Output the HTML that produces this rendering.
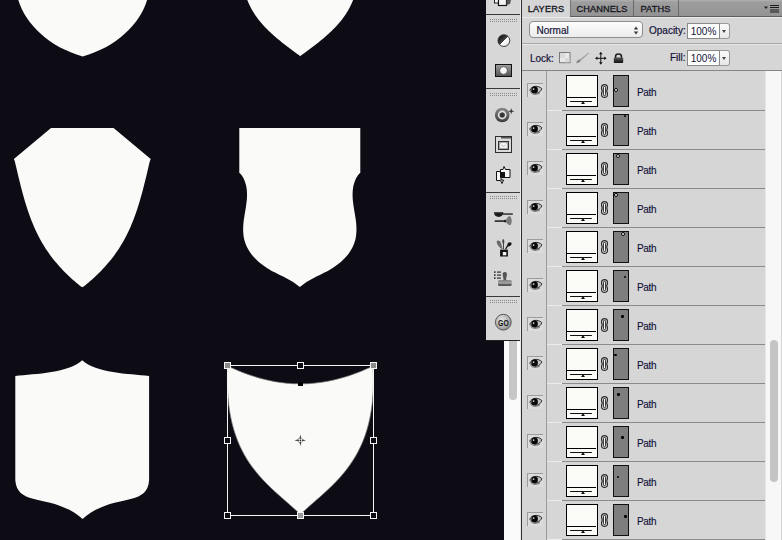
<!DOCTYPE html>
<html><head><meta charset="utf-8">
<style>
*{margin:0;padding:0;box-sizing:border-box}
html,body{width:782px;height:540px;overflow:hidden;background:#0d0b14;font-family:"Liberation Sans",sans-serif}
.abs{position:absolute}
#canvas{position:absolute;left:0;top:0}
#toolbar{position:absolute;left:486px;top:0;width:35px;height:341px;background:#d7d7d7;border-bottom:1px solid #222}
.tsep{position:absolute;left:0;width:35px;height:1px;background:#3a3a3a}
.grip{position:absolute;left:4px;width:27px;height:4px;background:repeating-linear-gradient(90deg,#8a8a8a 0 1px,transparent 1px 2px);-webkit-mask:repeating-linear-gradient(180deg,#000 0 1px,transparent 1px 2px);mask:repeating-linear-gradient(180deg,#000 0 1px,transparent 1px 2px)}
#vscroll{position:absolute;left:504px;top:341px;width:17px;height:199px;background:#fafafa;border-right:1px solid #1a1a1a}
#vthumb{position:absolute;left:5px;top:0;width:8px;height:59px;background:#c6c6c6;border-radius:0 0 4px 4px}
#vline{position:absolute;left:520px;top:0;width:1px;height:540px;background:#eaeaea}
#vline2{position:absolute;left:521px;top:0;width:1px;height:540px;background:#2e2e2e}
#panel{position:absolute;left:522px;top:0;width:260px;height:540px;background:#d6d6d6;overflow:hidden}
#tabs{position:absolute;left:0;top:0;width:260px;height:17px;background:linear-gradient(#b2b2b2 0,#9e9e9e 2px,#939393 100%);border-bottom:1px solid #5e5e5e}
.tab{position:absolute;top:0;height:16px;font-size:9.2px;letter-spacing:0.15px;color:#1a1a24;line-height:16px;padding-top:1px;text-align:center;-webkit-text-stroke:0.35px #1a1a24}
.tab.act{background:#d6d6d6;height:17px;color:#101828}
.tsepv{position:absolute;top:0;width:1px;height:16px;background:#6a6a6a}
.row{position:absolute;left:0;width:243px;height:39px}
.row:before{content:"";position:absolute;left:40px;top:0;width:203px;height:1px;background:#8a8a8a}
.row.first:before,.row.first:after{display:none}
.row:after{content:"";position:absolute;left:25px;top:0;width:15px;height:1px;background:#ececec}
.eye{position:absolute;left:5px;top:12px;width:16px;height:14px;border-top:1px solid #9c9c9c;border-left:1px solid #9c9c9c;background:#dcdcdc}
.ecol{position:absolute;left:24px;top:71px;width:1px;height:469px;background:#9a9a9a}
.thumb{position:absolute;left:44px;top:4px;width:32px;height:32px;background:#fbfbf8;border:1.5px solid #000}
.mask{position:absolute;left:91px;top:4px;width:16px;height:32px;background:#7e7e7e;border:1.5px solid #111}
.pname{position:absolute;left:115px;top:16px;font-size:10px;letter-spacing:-0.35px;color:#10103a;-webkit-text-stroke:0.12px #10103a}
#rscroll{position:absolute;left:243px;top:71px;width:16px;height:469px;background:#f7f7f7;border-left:1px solid #e6e6e6}
#rthumb{position:absolute;left:4px;top:269px;width:8px;height:142px;background:#c4c4c4;border-radius:4px}

#opts{position:absolute;left:0;top:17px;width:260px;height:53px;background:#d6d6d6;box-shadow:inset 0 1px 0 #e9e9e9}
.hl{position:absolute;left:0;width:260px;height:1px}
.dd{position:absolute;left:7px;top:4px;width:114px;height:17px;border:1px solid #8e8e8e;border-radius:4px;background:linear-gradient(#fdfdfd,#ececec)}
.dd span{position:absolute;left:6.5px;top:3px;-webkit-text-stroke:0.2px #16163a;font-size:10px;color:#16163a}
.lbl{position:absolute;font-size:10px;color:#141438;-webkit-text-stroke:0.2px #141438}
.inp{position:absolute;width:33px;height:16px;border:1px solid #8a8a8a;background:#fff;font-size:10px;color:#141438;text-align:center;line-height:15px}
.stp{position:absolute;width:10px;height:16px;border:1px solid #9a9a9a;border-left:none;border-radius:0 3px 3px 0;background:linear-gradient(#fbfbfb,#e6e6e6)}
.stp:after{content:"";position:absolute;left:2px;top:6px;border-left:2.5px solid transparent;border-right:2.5px solid transparent;border-top:3px solid #444}
.dot{position:absolute;width:2.6px;height:2.6px;border-radius:50%;background:#000}
.dot.h{background:#fff;border:0.8px solid #000;width:4px;height:4px}
.tl1{position:absolute;left:0;top:21px;width:29px;height:1px;background:#000}
.tl2{position:absolute;left:3px;top:24.5px;width:22px;height:1px;background:#111;border-radius:1px}
.tri{position:absolute;left:14px;top:25px;border-left:2.5px solid transparent;border-right:2.5px solid transparent;border-bottom:3px solid #111}
.link{position:absolute;left:79px;top:13px;width:7px;height:14px}
</style></head><body>


<svg id="canvas" width="782" height="540" viewBox="0 0 782 540">
  <g fill="#fafaf8">
    <!-- shape 1 -->
    <path d="M18.3 -2 L18.3 0 C25.51 24.42 49.48 47.07 82.7 56.5 C115.92 47.07 139.89 24.42 147.1 0 L147.1 -2 Z"/>
    <!-- shape 2 -->
    <path d="M246.20 -3.00 246.79 -1.46 247.38 0.14 248.01 1.72 248.67 3.27 249.36 4.80 250.09 6.31 250.85 7.79 251.65 9.26 252.47 10.70 253.32 12.12 254.20 13.52 255.11 14.89 256.05 16.25 257.01 17.59 258.00 18.91 259.01 20.22 260.05 21.50 261.11 22.77 262.18 24.02 263.28 25.25 264.40 26.47 265.54 27.67 266.70 28.86 267.87 30.03 269.06 31.19 270.27 32.34 271.49 33.47 272.73 34.59 273.97 35.70 275.23 36.80 276.50 37.89 277.78 38.96 279.07 40.03 280.37 41.08 281.67 42.13 282.98 43.17 284.30 44.20 285.62 45.22 286.94 46.23 288.27 47.24 289.60 48.24 290.93 49.24 292.27 50.23 293.60 51.22 294.93 52.20 296.26 53.17 297.58 54.15 298.90 55.12 300.20 56.20 L301.50 55.12 302.82 54.15 304.14 53.17 305.47 52.20 306.80 51.22 308.13 50.23 309.47 49.24 310.80 48.24 312.13 47.24 313.46 46.23 314.78 45.22 316.10 44.20 317.42 43.17 318.73 42.13 320.03 41.08 321.33 40.03 322.62 38.96 323.90 37.89 325.17 36.80 326.43 35.70 327.67 34.59 328.91 33.47 330.13 32.34 331.34 31.19 332.53 30.03 333.70 28.86 334.86 27.67 336.00 26.47 337.12 25.25 338.22 24.02 339.29 22.77 340.35 21.50 341.39 20.22 342.40 18.91 343.39 17.59 344.35 16.25 345.29 14.89 346.20 13.52 347.08 12.12 347.93 10.70 348.75 9.26 349.55 7.79 350.31 6.31 351.04 4.80 351.73 3.27 352.39 1.72 353.02 0.14 353.61 -1.46 354.20 -3.00 Z"/>
    <!-- shape 3 -->
    <path d="M51 128 L113.6 128 L150.70 158.90 149.80 161.20 149.23 163.64 148.66 166.09 148.08 168.54 147.50 171.00 146.92 173.46 146.34 175.92 145.74 178.38 145.14 180.84 144.53 183.31 143.91 185.77 143.28 188.23 142.64 190.68 141.98 193.14 141.31 195.59 140.62 198.03 139.91 200.47 139.18 202.90 138.44 205.32 137.67 207.74 136.88 210.15 136.06 212.54 135.22 214.93 134.35 217.30 133.46 219.67 132.54 222.02 131.58 224.35 130.59 226.67 129.58 228.98 128.52 231.27 127.43 233.54 126.31 235.79 125.14 238.03 123.94 240.24 122.70 242.44 121.41 244.61 120.09 246.76 118.72 248.89 117.30 251.00 115.85 253.08 114.37 255.14 112.84 257.18 111.28 259.19 109.68 261.17 108.05 263.12 106.39 265.05 104.70 266.96 102.98 268.83 101.23 270.67 99.45 272.49 97.65 274.28 95.83 276.03 93.98 277.76 92.11 279.45 90.21 281.11 88.30 282.74 86.38 284.34 84.43 285.90 82.30 287.30 L82.30 287.30 80.17 285.90 78.22 284.34 76.30 282.74 74.39 281.11 72.49 279.45 70.62 277.76 68.77 276.03 66.95 274.28 65.15 272.49 63.37 270.67 61.62 268.83 59.90 266.96 58.21 265.05 56.55 263.12 54.92 261.17 53.32 259.19 51.76 257.18 50.23 255.14 48.75 253.08 47.30 251.00 45.88 248.89 44.51 246.76 43.19 244.61 41.90 242.44 40.66 240.24 39.46 238.03 38.29 235.79 37.17 233.54 36.08 231.27 35.02 228.98 34.01 226.67 33.02 224.35 32.06 222.02 31.14 219.67 30.25 217.30 29.38 214.93 28.54 212.54 27.72 210.15 26.93 207.74 26.16 205.32 25.42 202.90 24.69 200.47 23.98 198.03 23.29 195.59 22.62 193.14 21.96 190.68 21.32 188.23 20.69 185.77 20.07 183.31 19.46 180.84 18.86 178.38 18.26 175.92 17.68 173.46 17.10 171.00 16.52 168.54 15.94 166.09 15.37 163.64 14.80 161.20 13.90 158.90 Z"/>
    <!-- shape 4 -->
    <path d="M239.3 128 L360.3 128 L360.3 173 L360.00 173.00 358.51 174.48 357.28 176.27 356.22 178.12 355.31 180.00 354.55 181.93 353.93 183.89 353.44 185.87 353.06 187.88 352.80 189.91 352.64 191.95 352.57 194.00 352.59 196.06 352.68 198.13 352.84 200.21 353.05 202.29 353.32 204.37 353.62 206.46 353.95 208.54 354.30 210.63 354.65 212.72 355.00 214.81 355.34 216.91 355.65 219.00 355.93 221.11 356.15 223.22 356.32 225.33 356.43 227.45 356.46 229.57 356.40 231.68 356.26 233.77 356.03 235.84 355.69 237.89 355.25 239.90 354.70 241.86 354.03 243.79 353.26 245.67 352.39 247.50 351.43 249.29 350.37 251.04 349.23 252.74 348.00 254.39 346.70 256.00 345.33 257.55 343.88 259.06 342.38 260.52 340.82 261.94 339.21 263.30 337.55 264.61 335.84 265.87 334.10 267.08 332.32 268.24 330.51 269.35 328.68 270.40 326.83 271.41 324.97 272.37 323.09 273.31 321.21 274.23 319.33 275.15 317.45 276.06 315.58 276.98 313.72 277.91 311.89 278.88 310.07 279.88 308.28 280.93 306.52 282.04 304.80 283.22 303.12 284.46 301.48 285.80 299.80 287.10 L299.80 287.10 298.12 285.80 296.48 284.46 294.80 283.22 293.08 282.04 291.32 280.93 289.53 279.88 287.71 278.88 285.88 277.91 284.02 276.98 282.15 276.06 280.27 275.15 278.39 274.23 276.51 273.31 274.63 272.37 272.77 271.41 270.92 270.40 269.09 269.35 267.28 268.24 265.50 267.08 263.76 265.87 262.05 264.61 260.39 263.30 258.78 261.94 257.22 260.52 255.72 259.06 254.27 257.55 252.90 256.00 251.60 254.39 250.37 252.74 249.23 251.04 248.17 249.29 247.21 247.50 246.34 245.67 245.57 243.79 244.90 241.86 244.35 239.90 243.91 237.89 243.57 235.84 243.34 233.77 243.20 231.68 243.14 229.57 243.17 227.45 243.28 225.33 243.45 223.22 243.67 221.11 243.95 219.00 244.26 216.91 244.60 214.81 244.95 212.72 245.30 210.63 245.65 208.54 245.98 206.46 246.28 204.37 246.55 202.29 246.76 200.21 246.92 198.13 247.01 196.06 247.03 194.00 246.96 191.95 246.80 189.91 246.54 187.88 246.16 185.87 245.67 183.89 245.05 181.93 244.29 180.00 243.38 178.12 242.32 176.27 241.09 174.48 239.60 173.00 L239.3 173 Z"/>
    <!-- shape 5 -->
    <path d="M15.3 376 C36.02 373.75 68.52 373.12 82.2 360.3 C95.88 373.12 128.38 373.75 149.1 376 L149.1 480.2 C147.44 507.75 112.53 492.54 82.6 518.9 C52.17 492.54 17.26 507.75 15.3 480.2 Z"/>
    <!-- shape 6 -->
    <path d="M227.8 366 C231 367.35 263.51 384.35 300.4 383.8 C337.29 384.35 369.80 367.35 373.00 366 C378.16 458.5 334.26 482.7 300.4 514.3 C266.54 482.7 222.64 458.5 227.8 366 Z" stroke="#7a7a7a" stroke-width="0.7"/>
  </g>
  <!-- transform box -->
  <g stroke="#f4f4f4" stroke-width="1" fill="none" shape-rendering="crispEdges">
    <rect x="227.5" y="365.5" width="146" height="150"/>
  </g>
  <g stroke="#f4f4f4" stroke-width="1" fill="#0d0b14" shape-rendering="crispEdges">
    <rect x="224.5" y="362.5" width="6" height="6" fill="#8a8a8a"/>
    <rect x="297.5" y="362.5" width="6" height="6"/>
    <rect x="370.5" y="362.5" width="6" height="6" fill="#8a8a8a"/>
    <rect x="224.5" y="437.5" width="6" height="6"/>
    <rect x="370.5" y="437.5" width="6" height="6"/>
    <rect x="224.5" y="512.5" width="6" height="6"/>
    <rect x="297.5" y="512.5" width="6" height="6" fill="#9a9a9a"/>
    <rect x="370.5" y="512.5" width="6" height="6"/>
  </g>
  <rect x="298" y="382" width="5" height="4" fill="#000"/>
  <g fill="#000">
    <path d="M300.3 434.5 L301 438.3 L300.3 439 L299.6 438.3Z M300.3 446 L301 442.3 L300.3 441.6 L299.6 442.3Z M294.5 440.3 L298.3 439.6 L299 440.3 L298.3 441Z M306 440.3 L302.3 439.6 L301.6 440.3 L302.3 441Z"/>
    <circle cx="300.3" cy="440.3" r="2.4" fill="none" stroke="#777" stroke-width="0.7"/>
    <circle cx="300.3" cy="440.3" r="0.8"/>
  </g>
</svg>

<div id="toolbar">

  <svg style="position:absolute;left:0;top:0" width="35" height="340" viewBox="486 0 35 340">
    <defs>
      <radialGradient id="gb" cx="0.4" cy="0.35" r="0.75"><stop offset="0" stop-color="#e6e6e6"/><stop offset="0.7" stop-color="#a8a8a8"/><stop offset="1" stop-color="#6a6a6a"/></radialGradient>
      <linearGradient id="gm" x1="0" y1="0" x2="0" y2="1"><stop offset="0" stop-color="#a0a0a0"/><stop offset="1" stop-color="#505050"/></linearGradient>
      <linearGradient id="gs" x1="0" y1="0" x2="0" y2="1"><stop offset="0" stop-color="#8a8a8a"/><stop offset="1" stop-color="#3a3a3a"/></linearGradient>
      <linearGradient id="ga" x1="0" y1="0" x2="1" y2="1"><stop offset="0" stop-color="#000"/><stop offset="0.49" stop-color="#444"/><stop offset="0.51" stop-color="#fff"/><stop offset="1" stop-color="#ddd"/></linearGradient>
      <linearGradient id="gt" x1="0" y1="0" x2="0" y2="1"><stop offset="0" stop-color="#777"/><stop offset="0.5" stop-color="#aaa"/><stop offset="1" stop-color="#222"/></linearGradient>
    </defs>
    <!-- top icon -->
    <rect x="494.5" y="-4" width="5" height="7" fill="#f2f2f2" stroke="#222" stroke-width="1"/>
    <rect x="498.5" y="-3" width="8" height="8.5" fill="#f4f4f4" stroke="#111" stroke-width="1.2"/>
    <path d="M506.5 0 L511 0 L510 4 L506.5 5Z" fill="#555"/>
    <!-- adjustments -->
    <circle cx="503.9" cy="40.6" r="5.9" fill="url(#ga)" stroke="#2a2a2a" stroke-width="0.9"/>
    <!-- masks -->
    <rect x="495.5" y="64.5" width="16" height="12" fill="url(#gm)" stroke="#111" stroke-width="1"/>
    <circle cx="503.5" cy="70.5" r="3.9" fill="#f7f7f7" stroke="#333" stroke-width="0.7"/>
    <!-- styles -->
    <circle cx="502.2" cy="115" r="7.3" fill="url(#gs)"/>
    <circle cx="502.2" cy="115" r="3.6" fill="none" stroke="#e0e0e0" stroke-width="1.6"/>
    <circle cx="502.2" cy="115" r="2.2" fill="#333"/>
    <path d="M511.2 108 L511.9 110.6 L514.5 111.3 L511.9 112 L511.2 114.6 L510.5 112 L507.9 111.3 L510.5 110.6Z" fill="#333"/>
    <!-- frame -->
    <rect x="495.5" y="136.5" width="16" height="16" fill="#dadada" stroke="#2e2e2e" stroke-width="1"/>
    <rect x="501" y="137" width="10" height="1.5" fill="#555"/>
    <rect x="498.5" y="141.5" width="10" height="8" fill="#a8a8a8" stroke="#333" stroke-width="1"/>
    <rect x="500" y="143" width="7" height="5" rx="1.5" fill="#f4f4f4"/>
    <path d="M501.5 145 L503.5 146.5 L505.5 145" fill="none" stroke="#999" stroke-width="0.7"/>
    <!-- clone source -->
    <path d="M496.5 171.5 L501 171.5 L501 180 L503.5 180 L502 183.5 L500.5 180.5 L496.5 180.5Z" fill="#f6f6f6" stroke="#111" stroke-width="1"/>
    <path d="M500.5 169.5 L503 169.5 L504 166.5 L505.5 169.5 L510 169.5 L510 177.5 L500.5 177.5Z" fill="#f6f6f6" stroke="#111" stroke-width="1"/>
    <rect x="500.5" y="172" width="4.5" height="5.5" fill="#111"/>
    <!-- brushes -->
    <path d="M493.9 212.2 L503.4 212.2 C503.4 215 501 216.9 498.6 216.9 C496 216.9 494 215 493.9 212.2Z" fill="#1e1e1e"/>
    <rect x="503" y="213.2" width="9.8" height="1.7" fill="#444"/>
    <rect x="494.7" y="220.2" width="10.5" height="1.8" fill="#3a3a3a"/>
    <circle cx="505.3" cy="221.1" r="1.3" fill="#111"/>
    <path d="M505.5 221 C506.5 218 508.5 216 510 216 C512 218.5 512.3 222.5 510.5 225.2 C508.5 225 506.5 223.5 505.5 221Z" fill="#7a7a7a"/>
    <!-- brush holder -->
    <path d="M501.5 249 C499 247 496.5 244 496.6 241.5 C497.6 240 499.5 240.5 500.5 242 C501.5 244.5 502.2 247 502.5 249Z" fill="#6a6a6a"/>
    <path d="M503 249 L503 244 C502 242 502 239.5 503.2 239 C504.5 239.5 504.6 242 504 244 L504 249Z" fill="#444"/>
    <path d="M505 249 L507.5 244.5 C507.5 242.5 509.5 241.5 511.5 242.8 C512 245 510.5 246.5 508 246.5 L506 249.5Z" fill="#151515"/>
    <rect x="500.1" y="249.6" width="7.8" height="6.9" fill="#111"/>
    <rect x="502.8" y="252" width="3.5" height="3.3" fill="#f2f2f2"/>
    <!-- tool presets -->
    <g fill="#333">
      <rect x="494" y="271.3" width="1.6" height="1.6"/><rect x="497" y="271.5" width="4" height="1.2"/>
      <rect x="494" y="274.3" width="1.6" height="1.6"/><rect x="497" y="274.5" width="4" height="1.2"/>
      <rect x="494" y="277.3" width="1.6" height="1.6"/><rect x="497" y="277.5" width="4" height="1.2"/>
    </g>
    <path d="M504.8 272 C506.6 272 507.4 273.5 506.8 275.5 L506 279.5 L507 280.5 L502.6 280.5 L503.6 279.5 L502.8 275.5 C502.2 273.5 503 272 504.8 272Z" fill="#555"/>
    <rect x="498" y="280.3" width="13.7" height="5.4" rx="1.2" fill="url(#gt)"/>
    <!-- go button -->
    <circle cx="503.3" cy="322.2" r="7.9" fill="url(#gb)" stroke="#5a5a5a" stroke-width="1"/>
    <text x="503.4" y="326" font-family="Liberation Sans" font-size="9.5" font-weight="bold" fill="#111" text-anchor="middle" transform="translate(503.4 0) scale(0.72 1) translate(-503.4 0)">GO</text>
  </svg>
  <div class="tsep" style="top:14px"></div>
  <div class="grip" style="top:19px"></div>
  <div class="tsep" style="top:88px"></div>
  <div class="grip" style="top:93px"></div>
  <div class="tsep" style="top:192px"></div>
  <div class="grip" style="top:196px"></div>
  <div class="tsep" style="top:296px"></div>
  <div class="grip" style="top:300px"></div>
</div>
<div id="vscroll"><div id="vthumb"></div></div>
<div id="vline"></div><div id="vline2"></div>

<div id="panel">
  <div id="tabs">
    <div class="tab act" style="left:0;width:48px">LAYERS</div>
    <div class="tab" style="left:48px;width:63px;border-left:1px solid #777">CHANNELS</div>
    <div class="tsepv" style="left:111px"></div>
    <div class="tab" style="left:111px;width:45px">PATHS</div>
    <div class="tsepv" style="left:156px"></div>
    <svg style="position:absolute;left:240px;top:3px" width="18" height="11" viewBox="0 0 18 11">
      <path d="M2 3.5 L6 3.5 L4 6 Z" fill="#222"/>
      <rect x="8" y="2" width="9" height="1" fill="#1a1a1a"/>
      <rect x="8" y="4" width="9" height="1" fill="#1a1a1a"/>
      <rect x="8" y="6.5" width="9" height="1" fill="#1a1a1a"/>
      <rect x="8" y="8.5" width="9" height="1" fill="#1a1a1a"/>
    </svg>
  </div>

  <div id="opts">
    <div class="dd"><span>Normal</span>
      <svg style="position:absolute;left:103px;top:4px" width="6" height="9" viewBox="0 0 6 9"><path d="M3 0.5 L5.2 3.5 L0.8 3.5 Z M0.8 5.5 L5.2 5.5 L3 8.5 Z" fill="#3a3a3a"/></svg>
    </div>
    <div class="lbl" style="left:127px;top:8px">Opacity:</div>
    <div class="inp" style="left:165px;top:6px">100%</div>
    <div class="stp" style="left:198px;top:6px"></div>
    <div class="hl" style="top:26px;background:#a9a9a9"></div>
    <div class="hl" style="top:27px;background:#e8e8e8"></div>
    <div class="lbl" style="left:8px;top:36px">Lock:</div>
    <svg style="position:absolute;left:37px;top:35px" width="74" height="13" viewBox="0 0 74 13">
      <defs><linearGradient id="lkg" x1="0" y1="0" x2="0" y2="1"><stop offset="0" stop-color="#555"/><stop offset="1" stop-color="#111"/></linearGradient></defs>
      <rect x="0.5" y="0.5" width="10.5" height="10.2" fill="#e9e9e9" stroke="#7a7a7a" stroke-width="1"/>
      <path d="M1 1h5v5H1z M6 6h4.5v4.2H6z" fill="#d9d9d9"/>
      <path d="M17.2 11.2 C17.6 9 18.8 7.6 20.6 7.2 L21.8 8.4 C21.4 10.2 19.6 11.2 17.2 11.2Z" fill="#8a8a8a"/>
      <path d="M21 7.6 L29.6 0.4 L30.2 1 L22 8.4Z" fill="#9a9a9a"/>
      <g fill="#111">
        <rect x="41.3" y="1.5" width="1" height="9.5"/>
        <rect x="37" y="5.8" width="9.6" height="1"/>
        <path d="M41.8 -0.2 L43.6 2.2 L40 2.2Z M41.8 12.7 L43.6 10.3 L40 10.3Z M36 6.3 L38.4 4.5 L38.4 8.1Z M47.6 6.3 L45.2 4.5 L45.2 8.1Z"/>
      </g>
      <path d="M56.6 6 L56.6 4.2 C56.6 1.2 62.4 1.2 62.4 4.2 L62.4 6" fill="none" stroke="#1a1a1a" stroke-width="1.6"/>
      <rect x="54.8" y="5.6" width="9.4" height="5.4" rx="0.8" fill="url(#lkg)"/>
    </svg>
    <div class="lbl" style="left:148px;top:35px">Fill:</div>
    <div class="inp" style="left:165px;top:33px">100%</div>
    <div class="stp" style="left:198px;top:33px"></div>
  </div>
  <div class="hl" style="top:70px;background:#858585"></div>
  <div class="ecol"></div>
  <div class="row first" style="top:71px">
    <div class="eye"><svg style="position:absolute;left:0.5px;top:0.3px" width="14" height="12" viewBox="0 0 14 12"><path d="M0.8 6.2 C2.5 1.8 9 1 12.8 4.6 C11.5 9.8 4 11 0.8 6.2 Z" fill="#c4c4c4" stroke="#2a2a2a" stroke-width="1"/><circle cx="5.6" cy="5.9" r="3.3" fill="#080808"/><circle cx="4.6" cy="5.1" r="0.9" fill="#d8d8d8"/><path d="M1.5 8.5 C4 11 8 10.8 11 9" fill="none" stroke="#555" stroke-width="0.8"/></svg></div>
    <div class="thumb"><div class="tl1"></div><div class="tl2"></div><div class="tri"></div></div>
    <div class="link"><svg width="7" height="14" viewBox="0.3 0 7.4 14" preserveAspectRatio="none"><path d="M4 0.6 C6.2 0.6 7.2 2 7.2 3.8 C7.2 5.4 6.4 6.2 6.4 7 C6.4 7.8 7.2 8.6 7.2 10.2 C7.2 12 6.2 13.4 4 13.4 C1.8 13.4 0.8 12 0.8 10.2 C0.8 8.6 1.6 7.8 1.6 7 C1.6 6.2 0.8 5.4 0.8 3.8 C0.8 2 1.8 0.6 4 0.6Z" fill="#d8d8d8" stroke="#2a2a2a" stroke-width="1.2"/><rect x="2.8" y="2.4" width="2.4" height="9.2" rx="1.2" fill="#fff" stroke="#1a1a1a" stroke-width="1"/></svg></div>
    <div class="mask"><div class="dot h" style="left:0.0px;top:11.9px"></div></div>
    <div class="pname">Path</div>
  </div>
  <div class="row" style="top:110px">
    <div class="eye"><svg style="position:absolute;left:0.5px;top:0.3px" width="14" height="12" viewBox="0 0 14 12"><path d="M0.8 6.2 C2.5 1.8 9 1 12.8 4.6 C11.5 9.8 4 11 0.8 6.2 Z" fill="#c4c4c4" stroke="#2a2a2a" stroke-width="1"/><circle cx="5.6" cy="5.9" r="3.3" fill="#080808"/><circle cx="4.6" cy="5.1" r="0.9" fill="#d8d8d8"/><path d="M1.5 8.5 C4 11 8 10.8 11 9" fill="none" stroke="#555" stroke-width="0.8"/></svg></div>
    <div class="thumb"><div class="tl1"></div><div class="tl2"></div><div class="tri"></div></div>
    <div class="link"><svg width="7" height="14" viewBox="0.3 0 7.4 14" preserveAspectRatio="none"><path d="M4 0.6 C6.2 0.6 7.2 2 7.2 3.8 C7.2 5.4 6.4 6.2 6.4 7 C6.4 7.8 7.2 8.6 7.2 10.2 C7.2 12 6.2 13.4 4 13.4 C1.8 13.4 0.8 12 0.8 10.2 C0.8 8.6 1.6 7.8 1.6 7 C1.6 6.2 0.8 5.4 0.8 3.8 C0.8 2 1.8 0.6 4 0.6Z" fill="#d8d8d8" stroke="#2a2a2a" stroke-width="1.2"/><rect x="2.8" y="2.4" width="2.4" height="9.2" rx="1.2" fill="#fff" stroke="#1a1a1a" stroke-width="1"/></svg></div>
    <div class="mask"><div class="dot" style="left:9.7px;top:-0.3px"></div></div>
    <div class="pname">Path</div>
  </div>
  <div class="row" style="top:149px">
    <div class="eye"><svg style="position:absolute;left:0.5px;top:0.3px" width="14" height="12" viewBox="0 0 14 12"><path d="M0.8 6.2 C2.5 1.8 9 1 12.8 4.6 C11.5 9.8 4 11 0.8 6.2 Z" fill="#c4c4c4" stroke="#2a2a2a" stroke-width="1"/><circle cx="5.6" cy="5.9" r="3.3" fill="#080808"/><circle cx="4.6" cy="5.1" r="0.9" fill="#d8d8d8"/><path d="M1.5 8.5 C4 11 8 10.8 11 9" fill="none" stroke="#555" stroke-width="0.8"/></svg></div>
    <div class="thumb"><div class="tl1"></div><div class="tl2"></div><div class="tri"></div></div>
    <div class="link"><svg width="7" height="14" viewBox="0.3 0 7.4 14" preserveAspectRatio="none"><path d="M4 0.6 C6.2 0.6 7.2 2 7.2 3.8 C7.2 5.4 6.4 6.2 6.4 7 C6.4 7.8 7.2 8.6 7.2 10.2 C7.2 12 6.2 13.4 4 13.4 C1.8 13.4 0.8 12 0.8 10.2 C0.8 8.6 1.6 7.8 1.6 7 C1.6 6.2 0.8 5.4 0.8 3.8 C0.8 2 1.8 0.6 4 0.6Z" fill="#d8d8d8" stroke="#2a2a2a" stroke-width="1.2"/><rect x="2.8" y="2.4" width="2.4" height="9.2" rx="1.2" fill="#fff" stroke="#1a1a1a" stroke-width="1"/></svg></div>
    <div class="mask"><div class="dot h" style="left:1.6px;top:-0.3px"></div></div>
    <div class="pname">Path</div>
  </div>
  <div class="row" style="top:188px">
    <div class="eye"><svg style="position:absolute;left:0.5px;top:0.3px" width="14" height="12" viewBox="0 0 14 12"><path d="M0.8 6.2 C2.5 1.8 9 1 12.8 4.6 C11.5 9.8 4 11 0.8 6.2 Z" fill="#c4c4c4" stroke="#2a2a2a" stroke-width="1"/><circle cx="5.6" cy="5.9" r="3.3" fill="#080808"/><circle cx="4.6" cy="5.1" r="0.9" fill="#d8d8d8"/><path d="M1.5 8.5 C4 11 8 10.8 11 9" fill="none" stroke="#555" stroke-width="0.8"/></svg></div>
    <div class="thumb"><div class="tl1"></div><div class="tl2"></div><div class="tri"></div></div>
    <div class="link"><svg width="7" height="14" viewBox="0.3 0 7.4 14" preserveAspectRatio="none"><path d="M4 0.6 C6.2 0.6 7.2 2 7.2 3.8 C7.2 5.4 6.4 6.2 6.4 7 C6.4 7.8 7.2 8.6 7.2 10.2 C7.2 12 6.2 13.4 4 13.4 C1.8 13.4 0.8 12 0.8 10.2 C0.8 8.6 1.6 7.8 1.6 7 C1.6 6.2 0.8 5.4 0.8 3.8 C0.8 2 1.8 0.6 4 0.6Z" fill="#d8d8d8" stroke="#2a2a2a" stroke-width="1.2"/><rect x="2.8" y="2.4" width="2.4" height="9.2" rx="1.2" fill="#fff" stroke="#1a1a1a" stroke-width="1"/></svg></div>
    <div class="mask"><div class="dot h" style="left:-0.1px;top:-0.4px"></div></div>
    <div class="pname">Path</div>
  </div>
  <div class="row" style="top:227px">
    <div class="eye"><svg style="position:absolute;left:0.5px;top:0.3px" width="14" height="12" viewBox="0 0 14 12"><path d="M0.8 6.2 C2.5 1.8 9 1 12.8 4.6 C11.5 9.8 4 11 0.8 6.2 Z" fill="#c4c4c4" stroke="#2a2a2a" stroke-width="1"/><circle cx="5.6" cy="5.9" r="3.3" fill="#080808"/><circle cx="4.6" cy="5.1" r="0.9" fill="#d8d8d8"/><path d="M1.5 8.5 C4 11 8 10.8 11 9" fill="none" stroke="#555" stroke-width="0.8"/></svg></div>
    <div class="thumb"><div class="tl1"></div><div class="tl2"></div><div class="tri"></div></div>
    <div class="link"><svg width="7" height="14" viewBox="0.3 0 7.4 14" preserveAspectRatio="none"><path d="M4 0.6 C6.2 0.6 7.2 2 7.2 3.8 C7.2 5.4 6.4 6.2 6.4 7 C6.4 7.8 7.2 8.6 7.2 10.2 C7.2 12 6.2 13.4 4 13.4 C1.8 13.4 0.8 12 0.8 10.2 C0.8 8.6 1.6 7.8 1.6 7 C1.6 6.2 0.8 5.4 0.8 3.8 C0.8 2 1.8 0.6 4 0.6Z" fill="#d8d8d8" stroke="#2a2a2a" stroke-width="1.2"/><rect x="2.8" y="2.4" width="2.4" height="9.2" rx="1.2" fill="#fff" stroke="#1a1a1a" stroke-width="1"/></svg></div>
    <div class="mask"><div class="dot h" style="left:6.8px;top:-0.1px"></div></div>
    <div class="pname">Path</div>
  </div>
  <div class="row" style="top:266px">
    <div class="eye"><svg style="position:absolute;left:0.5px;top:0.3px" width="14" height="12" viewBox="0 0 14 12"><path d="M0.8 6.2 C2.5 1.8 9 1 12.8 4.6 C11.5 9.8 4 11 0.8 6.2 Z" fill="#c4c4c4" stroke="#2a2a2a" stroke-width="1"/><circle cx="5.6" cy="5.9" r="3.3" fill="#080808"/><circle cx="4.6" cy="5.1" r="0.9" fill="#d8d8d8"/><path d="M1.5 8.5 C4 11 8 10.8 11 9" fill="none" stroke="#555" stroke-width="0.8"/></svg></div>
    <div class="thumb"><div class="tl1"></div><div class="tl2"></div><div class="tri"></div></div>
    <div class="link"><svg width="7" height="14" viewBox="0.3 0 7.4 14" preserveAspectRatio="none"><path d="M4 0.6 C6.2 0.6 7.2 2 7.2 3.8 C7.2 5.4 6.4 6.2 6.4 7 C6.4 7.8 7.2 8.6 7.2 10.2 C7.2 12 6.2 13.4 4 13.4 C1.8 13.4 0.8 12 0.8 10.2 C0.8 8.6 1.6 7.8 1.6 7 C1.6 6.2 0.8 5.4 0.8 3.8 C0.8 2 1.8 0.6 4 0.6Z" fill="#d8d8d8" stroke="#2a2a2a" stroke-width="1.2"/><rect x="2.8" y="2.4" width="2.4" height="9.2" rx="1.2" fill="#fff" stroke="#1a1a1a" stroke-width="1"/></svg></div>
    <div class="mask"><div class="dot" style="left:9.7px;top:4.9px"></div></div>
    <div class="pname">Path</div>
  </div>
  <div class="row" style="top:305px">
    <div class="eye"><svg style="position:absolute;left:0.5px;top:0.3px" width="14" height="12" viewBox="0 0 14 12"><path d="M0.8 6.2 C2.5 1.8 9 1 12.8 4.6 C11.5 9.8 4 11 0.8 6.2 Z" fill="#c4c4c4" stroke="#2a2a2a" stroke-width="1"/><circle cx="5.6" cy="5.9" r="3.3" fill="#080808"/><circle cx="4.6" cy="5.1" r="0.9" fill="#d8d8d8"/><path d="M1.5 8.5 C4 11 8 10.8 11 9" fill="none" stroke="#555" stroke-width="0.8"/></svg></div>
    <div class="thumb"><div class="tl1"></div><div class="tl2"></div><div class="tri"></div></div>
    <div class="link"><svg width="7" height="14" viewBox="0.3 0 7.4 14" preserveAspectRatio="none"><path d="M4 0.6 C6.2 0.6 7.2 2 7.2 3.8 C7.2 5.4 6.4 6.2 6.4 7 C6.4 7.8 7.2 8.6 7.2 10.2 C7.2 12 6.2 13.4 4 13.4 C1.8 13.4 0.8 12 0.8 10.2 C0.8 8.6 1.6 7.8 1.6 7 C1.6 6.2 0.8 5.4 0.8 3.8 C0.8 2 1.8 0.6 4 0.6Z" fill="#d8d8d8" stroke="#2a2a2a" stroke-width="1.2"/><rect x="2.8" y="2.4" width="2.4" height="9.2" rx="1.2" fill="#fff" stroke="#1a1a1a" stroke-width="1"/></svg></div>
    <div class="mask"><div class="dot" style="left:7.0px;top:5.1px"></div></div>
    <div class="pname">Path</div>
  </div>
  <div class="row" style="top:344px">
    <div class="eye"><svg style="position:absolute;left:0.5px;top:0.3px" width="14" height="12" viewBox="0 0 14 12"><path d="M0.8 6.2 C2.5 1.8 9 1 12.8 4.6 C11.5 9.8 4 11 0.8 6.2 Z" fill="#c4c4c4" stroke="#2a2a2a" stroke-width="1"/><circle cx="5.6" cy="5.9" r="3.3" fill="#080808"/><circle cx="4.6" cy="5.1" r="0.9" fill="#d8d8d8"/><path d="M1.5 8.5 C4 11 8 10.8 11 9" fill="none" stroke="#555" stroke-width="0.8"/></svg></div>
    <div class="thumb"><div class="tl1"></div><div class="tl2"></div><div class="tri"></div></div>
    <div class="link"><svg width="7" height="14" viewBox="0.3 0 7.4 14" preserveAspectRatio="none"><path d="M4 0.6 C6.2 0.6 7.2 2 7.2 3.8 C7.2 5.4 6.4 6.2 6.4 7 C6.4 7.8 7.2 8.6 7.2 10.2 C7.2 12 6.2 13.4 4 13.4 C1.8 13.4 0.8 12 0.8 10.2 C0.8 8.6 1.6 7.8 1.6 7 C1.6 6.2 0.8 5.4 0.8 3.8 C0.8 2 1.8 0.6 4 0.6Z" fill="#d8d8d8" stroke="#2a2a2a" stroke-width="1.2"/><rect x="2.8" y="2.4" width="2.4" height="9.2" rx="1.2" fill="#fff" stroke="#1a1a1a" stroke-width="1"/></svg></div>
    <div class="mask"><div class="dot" style="left:0.4px;top:4.9px"></div></div>
    <div class="pname">Path</div>
  </div>
  <div class="row" style="top:383px">
    <div class="eye"><svg style="position:absolute;left:0.5px;top:0.3px" width="14" height="12" viewBox="0 0 14 12"><path d="M0.8 6.2 C2.5 1.8 9 1 12.8 4.6 C11.5 9.8 4 11 0.8 6.2 Z" fill="#c4c4c4" stroke="#2a2a2a" stroke-width="1"/><circle cx="5.6" cy="5.9" r="3.3" fill="#080808"/><circle cx="4.6" cy="5.1" r="0.9" fill="#d8d8d8"/><path d="M1.5 8.5 C4 11 8 10.8 11 9" fill="none" stroke="#555" stroke-width="0.8"/></svg></div>
    <div class="thumb"><div class="tl1"></div><div class="tl2"></div><div class="tri"></div></div>
    <div class="link"><svg width="7" height="14" viewBox="0.3 0 7.4 14" preserveAspectRatio="none"><path d="M4 0.6 C6.2 0.6 7.2 2 7.2 3.8 C7.2 5.4 6.4 6.2 6.4 7 C6.4 7.8 7.2 8.6 7.2 10.2 C7.2 12 6.2 13.4 4 13.4 C1.8 13.4 0.8 12 0.8 10.2 C0.8 8.6 1.6 7.8 1.6 7 C1.6 6.2 0.8 5.4 0.8 3.8 C0.8 2 1.8 0.6 4 0.6Z" fill="#d8d8d8" stroke="#2a2a2a" stroke-width="1.2"/><rect x="2.8" y="2.4" width="2.4" height="9.2" rx="1.2" fill="#fff" stroke="#1a1a1a" stroke-width="1"/></svg></div>
    <div class="mask"><div class="dot" style="left:3.0px;top:5.1px"></div></div>
    <div class="pname">Path</div>
  </div>
  <div class="row" style="top:422px">
    <div class="eye"><svg style="position:absolute;left:0.5px;top:0.3px" width="14" height="12" viewBox="0 0 14 12"><path d="M0.8 6.2 C2.5 1.8 9 1 12.8 4.6 C11.5 9.8 4 11 0.8 6.2 Z" fill="#c4c4c4" stroke="#2a2a2a" stroke-width="1"/><circle cx="5.6" cy="5.9" r="3.3" fill="#080808"/><circle cx="4.6" cy="5.1" r="0.9" fill="#d8d8d8"/><path d="M1.5 8.5 C4 11 8 10.8 11 9" fill="none" stroke="#555" stroke-width="0.8"/></svg></div>
    <div class="thumb"><div class="tl1"></div><div class="tl2"></div><div class="tri"></div></div>
    <div class="link"><svg width="7" height="14" viewBox="0.3 0 7.4 14" preserveAspectRatio="none"><path d="M4 0.6 C6.2 0.6 7.2 2 7.2 3.8 C7.2 5.4 6.4 6.2 6.4 7 C6.4 7.8 7.2 8.6 7.2 10.2 C7.2 12 6.2 13.4 4 13.4 C1.8 13.4 0.8 12 0.8 10.2 C0.8 8.6 1.6 7.8 1.6 7 C1.6 6.2 0.8 5.4 0.8 3.8 C0.8 2 1.8 0.6 4 0.6Z" fill="#d8d8d8" stroke="#2a2a2a" stroke-width="1.2"/><rect x="2.8" y="2.4" width="2.4" height="9.2" rx="1.2" fill="#fff" stroke="#1a1a1a" stroke-width="1"/></svg></div>
    <div class="mask"><div class="dot" style="left:7.0px;top:9.4px"></div></div>
    <div class="pname">Path</div>
  </div>
  <div class="row" style="top:461px">
    <div class="eye"><svg style="position:absolute;left:0.5px;top:0.3px" width="14" height="12" viewBox="0 0 14 12"><path d="M0.8 6.2 C2.5 1.8 9 1 12.8 4.6 C11.5 9.8 4 11 0.8 6.2 Z" fill="#c4c4c4" stroke="#2a2a2a" stroke-width="1"/><circle cx="5.6" cy="5.9" r="3.3" fill="#080808"/><circle cx="4.6" cy="5.1" r="0.9" fill="#d8d8d8"/><path d="M1.5 8.5 C4 11 8 10.8 11 9" fill="none" stroke="#555" stroke-width="0.8"/></svg></div>
    <div class="thumb"><div class="tl1"></div><div class="tl2"></div><div class="tri"></div></div>
    <div class="link"><svg width="7" height="14" viewBox="0.3 0 7.4 14" preserveAspectRatio="none"><path d="M4 0.6 C6.2 0.6 7.2 2 7.2 3.8 C7.2 5.4 6.4 6.2 6.4 7 C6.4 7.8 7.2 8.6 7.2 10.2 C7.2 12 6.2 13.4 4 13.4 C1.8 13.4 0.8 12 0.8 10.2 C0.8 8.6 1.6 7.8 1.6 7 C1.6 6.2 0.8 5.4 0.8 3.8 C0.8 2 1.8 0.6 4 0.6Z" fill="#d8d8d8" stroke="#2a2a2a" stroke-width="1.2"/><rect x="2.8" y="2.4" width="2.4" height="9.2" rx="1.2" fill="#fff" stroke="#1a1a1a" stroke-width="1"/></svg></div>
    <div class="mask"><div class="dot" style="left:2.7px;top:9.7px"></div></div>
    <div class="pname">Path</div>
  </div>
  <div class="row" style="top:500px">
    <div class="eye"><svg style="position:absolute;left:0.5px;top:0.3px" width="14" height="12" viewBox="0 0 14 12"><path d="M0.8 6.2 C2.5 1.8 9 1 12.8 4.6 C11.5 9.8 4 11 0.8 6.2 Z" fill="#c4c4c4" stroke="#2a2a2a" stroke-width="1"/><circle cx="5.6" cy="5.9" r="3.3" fill="#080808"/><circle cx="4.6" cy="5.1" r="0.9" fill="#d8d8d8"/><path d="M1.5 8.5 C4 11 8 10.8 11 9" fill="none" stroke="#555" stroke-width="0.8"/></svg></div>
    <div class="thumb"><div class="tl1"></div><div class="tl2"></div><div class="tri"></div></div>
    <div class="link"><svg width="7" height="14" viewBox="0.3 0 7.4 14" preserveAspectRatio="none"><path d="M4 0.6 C6.2 0.6 7.2 2 7.2 3.8 C7.2 5.4 6.4 6.2 6.4 7 C6.4 7.8 7.2 8.6 7.2 10.2 C7.2 12 6.2 13.4 4 13.4 C1.8 13.4 0.8 12 0.8 10.2 C0.8 8.6 1.6 7.8 1.6 7 C1.6 6.2 0.8 5.4 0.8 3.8 C0.8 2 1.8 0.6 4 0.6Z" fill="#d8d8d8" stroke="#2a2a2a" stroke-width="1.2"/><rect x="2.8" y="2.4" width="2.4" height="9.2" rx="1.2" fill="#fff" stroke="#1a1a1a" stroke-width="1"/></svg></div>
    <div class="mask"><div class="dot" style="left:10.1px;top:10.0px"></div></div>
    <div class="pname">Path</div>
  </div>
  <div class="row" style="top:539px"></div>
  <div id="rscroll"><div id="rthumb"></div></div>
</div>
</body></html>
